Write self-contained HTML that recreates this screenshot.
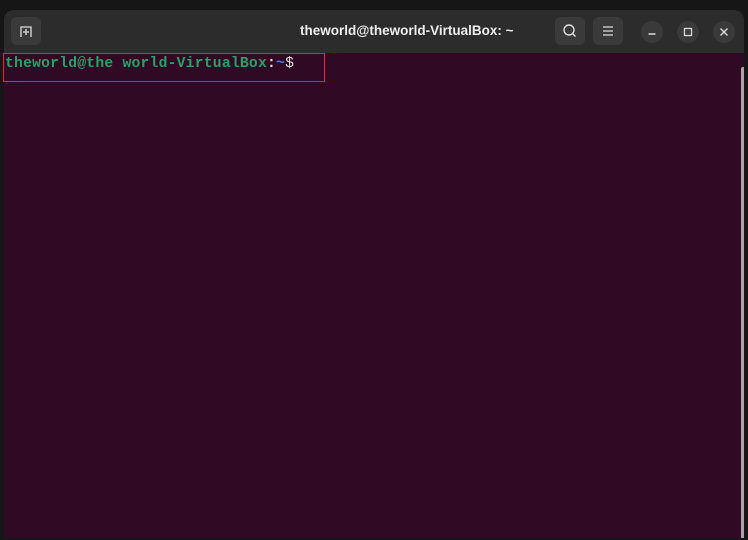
<!DOCTYPE html>
<html><head><style>
html,body{margin:0;padding:0;width:748px;height:540px;background:#161616;overflow:hidden}
.win{position:absolute;left:4px;top:10px;width:740px;height:528px;background:#300a24;border-radius:10px 10px 0 0;overflow:hidden}
.bar{position:absolute;left:0;top:0;width:740px;height:43px;background:#2c2c2c}
.title{position:absolute;left:296px;top:13px;color:#eee;font:bold 13.5px "Liberation Sans",sans-serif;white-space:pre}
.btn{position:absolute;top:7px;width:30px;height:28px;border-radius:6px;background:#3a3a3a}
.cbtn{position:absolute;top:11px;width:22px;height:22px;border-radius:11px;background:#3a3a3a}
.term{position:absolute;left:5px;top:56px;font:bold 14.7px "Liberation Mono",monospace;color:#26a269;white-space:pre;letter-spacing:0.22px}
.box{position:absolute;left:3px;top:53px;width:320px;height:27px;border:1px solid #ff2030}
.sb{position:absolute;left:737px;top:57px;width:4px;height:477px;background:#a9a3a7;border-radius:2px}
</style></head><body>
<div class="win">
 <div class="bar">
  <div class="btn" style="left:7px"><svg width="30" height="28"><path d="M10 20V10h10v10M15 12v6M12 15h6" stroke="#ddd" stroke-width="1.3" fill="none"/></svg></div>
  <div class="title">theworld@theworld-VirtualBox: ~</div>
  <div class="btn" style="left:551px"><svg width="30" height="28"><circle cx="14" cy="13" r="5" stroke="#ddd" stroke-width="1.4" fill="none"/><path d="M17.5 16.5l3 3" stroke="#ddd" stroke-width="1.4"/></svg></div>
  <div class="btn" style="left:589px"><svg width="30" height="28"><path d="M10 10h10M10 14h10M10 18h10" stroke="#ddd" stroke-width="1.2"/></svg></div>
  <div class="cbtn" style="left:637px"><svg width="22" height="22"><path d="M7.5 13h7" stroke="#ddd" stroke-width="1.4"/></svg></div>
  <div class="cbtn" style="left:673px"><svg width="22" height="22"><rect x="7.5" y="7.5" width="7" height="7" stroke="#ddd" stroke-width="1.3" fill="none"/></svg></div>
  <div class="cbtn" style="left:709px"><svg width="22" height="22"><path d="M7.5 7.5l7 7M14.5 7.5l-7 7" stroke="#ddd" stroke-width="1.4"/></svg></div>
 </div>
 <div class="sb"></div>
</div>
<div class="term">theworld@the world-VirtualBox<span style="color:#ddd">:</span><span style="color:#4a7bd6">~</span><span style="color:#ddd;font-weight:normal">$</span></div>
<div class="box"></div>
</body></html>
